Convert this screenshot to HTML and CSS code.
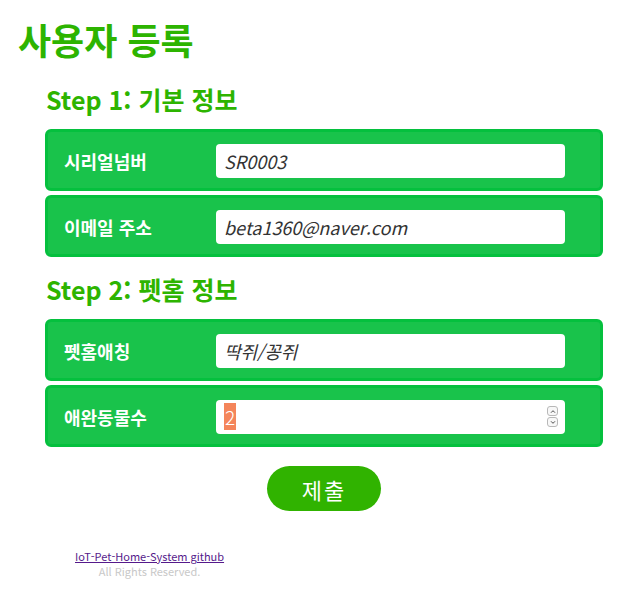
FILE: index.html
```html
<!DOCTYPE html>
<html lang="ko">
<head>
<meta charset="utf-8">
<title>사용자 등록</title>
<link rel="stylesheet" href="styles.css">
</head>
<body>
<h1 class="title">사용자 등록</h1>
<form class="form">
  <h2 class="step">Step 1: 기본 정보</h2>
  <div class="row">
    <label class="label">시리얼넘버</label>
    <div class="field"><span class="value">SR0003</span></div>
  </div>
  <div class="row">
    <label class="label">이메일 주소</label>
    <div class="field"><span class="value">beta1360@naver.com</span></div>
  </div>
  <h2 class="step step2">Step 2: 펫홈 정보</h2>
  <div class="row">
    <label class="label">펫홈애칭</label>
    <div class="field"><span class="value">딱쥐/꽁쥐</span></div>
  </div>
  <div class="row">
    <label class="label">애완동물수</label>
    <div class="field number">
      <span class="value num"><span class="sel">2</span></span>
      <span class="spin">
        <span class="spin-btn"><svg viewBox="0 0 10 8" width="10" height="8"><path d="M2.5 5.5 L5 3 L7.5 5.5" fill="none" stroke="#444" stroke-width="1.2"/></svg></span>
        <span class="spin-btn"><svg viewBox="0 0 10 8" width="10" height="8"><path d="M2.5 2.5 L5 5 L7.5 2.5" fill="none" stroke="#444" stroke-width="1.2"/></svg></span>
      </span>
    </div>
  </div>
  <div class="actions">
    <button type="button" class="submit">제출</button>
  </div>
</form>
<footer class="footer">
  <div class="foot-inner">
    <a class="foot-link" href="#">IoT-Pet-Home-System github</a>
    <div class="rights">All Rights Reserved.</div>
  </div>
</footer>
</body>
</html>
```

FILE: styles.css
```css
body {
  margin: 8px;
  font-family: "Noto Sans CJK KR", "Noto Sans", sans-serif;
  background: #fff;
}
.title {
  margin: 11px 0 0 10px;
  font-size: 36px;
  line-height: 40px;
  font-weight: bold;
  color: #2db400;
}
.form {
  margin: 0 13px 0 37px;
  display: flex;
  flex-direction: column;
}
.step {
  margin: 25px 0 15px 1px;
  font-size: 25px;
  line-height: 30px;
  font-weight: bold;
  color: #2db400;
}
.step2 {
  margin-top: 13px;
}
.row {
  display: flex;
  align-items: center;
  height: 62px;
  box-sizing: border-box;
  background: #19c34b;
  border: 3px solid #05c03e;
  border-radius: 6px;
  padding: 1px 35px 0 16px;
  margin-bottom: 4px;
}
.label {
  width: 152px;
  font-size: 18px;
  font-weight: bold;
  color: #fff;
}
.field {
  flex: 1;
  height: 34px;
  background: #fff;
  border-radius: 4px;
  display: flex;
  align-items: center;
  padding: 0 8px;
}
.value {
  font-style: italic;
  font-size: 18px;
  color: #333;
}
.num {
  font-style: normal;
  font-size: 19px;
  flex: 1;
}
.sel {
  background: #f4855b;
  color: #fff;
  font-weight: 300;
  padding: 0 1px;
}
.spin {
  display: flex;
  flex-direction: column;
  gap: 1px;
  margin-right: -1px;
}
.spin-btn {
  width: 11px;
  height: 10px;
  border: 1px solid #b8b8b8;
  border-radius: 3px;
  display: flex;
  align-items: center;
  justify-content: center;
  box-sizing: border-box;
  background: #f8f8f8;
}
.spin-btn svg {
  width: 8px;
  height: 7px;
}
.actions {
  display: flex;
  justify-content: center;
  margin-top: 15px;
}
.submit {
  width: 114px;
  height: 45px;
  border: none;
  border-radius: 23px;
  background: #30b300;
  color: #fff;
  font-family: "Noto Sans CJK KR", sans-serif;
  font-size: 22px;
  letter-spacing: 2px;
  padding: 0;
}
.footer {
  margin-top: 38px;
  padding-left: 67px;
}
.foot-inner {
  display: inline-block;
  text-align: center;
  font-size: 11px;
  line-height: 14px;
}
.foot-link {
  color: #551a8b;
}
.rights {
  color: #c8c8c8;
  line-height: 14px;
  margin-top: 1px;
}
```
